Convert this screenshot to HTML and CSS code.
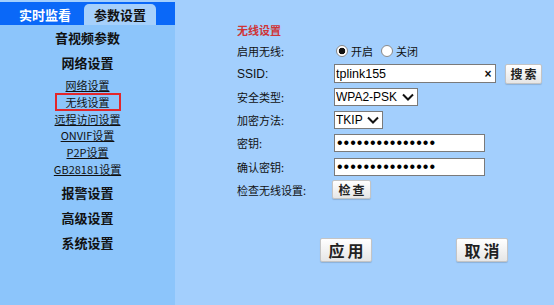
FILE: index.html
```html
<!DOCTYPE html>
<html lang="zh">
<head>
<meta charset="utf-8">
<title>参数设置</title>
<link rel="stylesheet" href="styles.css">
</head>
<body>
<div class="page">
  <aside class="side">
    <div class="tabbar">
      <span class="tab">实时监看</span>
      <span class="tab active">参数设置</span>
    </div>
    <nav class="nav">
      <a class="group">音视频参数</a>
      <a class="group sub-head">网络设置</a>
      <a class="link">网络设置</a>
      <a class="link current"><span class="mark">无线设置</span></a>
      <a class="link">远程访问设置</a>
      <a class="link">ONVIF设置</a>
      <a class="link">P2P设置</a>
      <a class="link">GB28181设置</a>
      <a class="group gap">报警设置</a>
      <a class="group">高级设置</a>
      <a class="group">系统设置</a>
    </nav>
  </aside>
  <main class="main">
    <div class="title">无线设置</div>
    <div class="form">
      <div class="row">
        <span class="label">启用无线:</span>
        <label class="radio"><input type="radio" name="en" checked><span>开启</span></label>
        <label class="radio"><input type="radio" name="en"><span>关闭</span></label>
      </div>
      <div class="row">
        <span class="label latin">SSID:</span>
        <span class="textbox ssid"><input type="text" value="tplink155"><span class="clear">×</span></span>
        <button class="btn small">搜索</button>
      </div>
      <div class="row">
        <span class="label">安全类型:</span>
        <span class="sel w84"><select><option>WPA2-PSK</option></select><svg class="chev" viewBox="0 0 12 8" width="12" height="8"><path d="M1 1.5 L6 6.5 L11 1.5" fill="none" stroke="#111" stroke-width="2"/></svg></span>
      </div>
      <div class="row">
        <span class="label">加密方法:</span>
        <span class="sel w49"><select><option>TKIP</option></select><svg class="chev" viewBox="0 0 12 8" width="12" height="8"><path d="M1 1.5 L6 6.5 L11 1.5" fill="none" stroke="#111" stroke-width="2"/></svg></span>
      </div>
      <div class="row">
        <span class="label">密钥:</span>
        <input class="pwd" type="password" value="123456789012345">
      </div>
      <div class="row">
        <span class="label">确认密钥:</span>
        <input class="pwd" type="password" value="123456789012345">
      </div>
      <div class="row">
        <span class="label">检查无线设置:</span>
        <button class="btn small check">检查</button>
      </div>
    </div>
    <div class="actions">
      <button class="btn big">应用</button>
      <button class="btn big">取消</button>
    </div>
  </main>
</div>
</body>
</html>
```

FILE: styles.css
```css
html, body {
  margin: 0;
  padding: 0;
  background: #a3cffd;
}
body {
  font-family: "Liberation Sans", "Noto Sans CJK SC", sans-serif;
  font-size: 12px;
  color: #111;
}
.page {
  display: flex;
  height: 305px;
}
.side {
  width: 175px;
  display: flex;
  flex-direction: column;
  padding-top: 2px;
  background: #a3cffd;
}
.tabbar {
  height: 23px;
  background: #0a68f8;
  display: flex;
  align-items: flex-end;
}
.tab {
  font-family: "Noto Sans CJK SC", sans-serif;
  font-size: 13px;
  font-weight: bold;
  color: #fff;
  line-height: 21px;
  height: 21px;
  text-align: center;
}
.tab:first-child {
  width: 72px;
  margin-left: 9px;
  margin-right: 3px;
}
.tab.active {
  width: 72px;
  background: #a6d0fb;
  color: #111;
  border-radius: 5px 5px 0 0;
}
.nav {
  flex: 1;
  background: #8cc5fb;
  display: flex;
  flex-direction: column;
  align-items: center;
}
.nav a {
  font-family: "Noto Sans CJK SC", sans-serif;
  color: #111;
  text-align: center;
}
.group {
  font-size: 13px;
  font-weight: bold;
  line-height: 25px;
  height: 25px;
}
.group.sub-head {
  margin-bottom: 2px;
}
.group.gap {
  margin-top: 2px;
}
.link {
  font-size: 11px;
  line-height: 16.8px;
  height: 16.8px;
  text-decoration: underline;
  color: #1a1a1a;
}
.mark {
  display: inline-block;
  padding: 0 9px;
  height: 14px;
  line-height: 14px;
  border: 2px solid #e3262a;
  margin-top: -1px;
}
.main {
  flex: 1;
  padding-left: 62px;
  padding-top: 22px;
  display: flex;
  flex-direction: column;
}
.title {
  font-family: "Noto Sans CJK SC", sans-serif;
  font-weight: bold;
  color: #cf3537;
  font-size: 11px;
  line-height: 16px;
  height: 16px;
}
.form {
  display: flex;
  flex-direction: column;
  padding-top: 1px;
}
.row {
  height: 23.2px;
  display: flex;
  align-items: center;
}
.label {
  width: 97px;
  flex: none;
  font-family: "Noto Sans CJK SC", sans-serif;
  font-size: 11px;
}
.label.latin {
  font-family: "Liberation Sans", "Noto Sans CJK SC", sans-serif;
  font-size: 12px;
}
.radio {
  display: flex;
  align-items: center;
  font-family: "Noto Sans CJK SC", sans-serif;
  font-size: 11px;
  margin-right: 8px;
}
.radio:first-of-type {
  margin-left: 2px;
}
.radio input {
  appearance: none;
  -webkit-appearance: none;
  width: 12px;
  height: 12px;
  margin: 0 3px 0 0;
  border: 1px solid #8a8a8a;
  border-radius: 50%;
  background: #fff;
  box-sizing: border-box;
}
.radio input:checked {
  background: radial-gradient(circle, #111 0 3px, #fff 3.6px);
}
.textbox {
  display: flex;
  align-items: center;
  box-sizing: border-box;
  height: 19px;
  border: 1px solid #7a7a7a;
  background: #fff;
}
.ssid {
  width: 162px;
}
.textbox input {
  border: 0;
  outline: 0;
  flex: 1;
  min-width: 0;
  padding: 0 0 0 1px;
  font-family: "Liberation Sans", sans-serif;
  font-size: 12.5px;
  color: #000;
  background: transparent;
}
.clear {
  font-family: "Liberation Sans", sans-serif;
  font-size: 12px;
  font-weight: bold;
  width: 14px;
  text-align: center;
  margin-right: 0;
}
.btn {
  font-family: "Noto Sans CJK SC", sans-serif;
  font-weight: bold;
  color: #222;
  background: linear-gradient(#ffffff, #e6e6e6);
  border: 1px solid #c4c4c4;
  border-radius: 2px;
  box-shadow: 0 1px 1px rgba(0,0,0,0.15);
  padding: 0;
  letter-spacing: 2px;
}
.btn.small {
  font-size: 12px;
  height: 20px;
  width: 37px;
  line-height: 18px;
  margin-left: 9px;
  text-indent: 2px;
}
.btn.check {
  margin-left: -2px;
  width: 39px;
  height: 19px;
}
.sel {
  position: relative;
  display: inline-flex;
  height: 18px;
  box-sizing: border-box;
  border: 1px solid #7a7a7a;
  background: #fff;
}
.sel select {
  appearance: none;
  -webkit-appearance: none;
  border: 0;
  outline: 0;
  background: transparent;
  font-family: "Liberation Sans", sans-serif;
  font-size: 12px;
  color: #000;
  padding: 0 0 0 1px;
  width: 100%;
  height: 16px;
  line-height: 16px;
}
.sel .chev {
  position: absolute;
  right: 3px;
  top: 4px;
  pointer-events: none;
}
.w84 { width: 84px; }
.w49 { width: 49px; }
.pwd {
  box-sizing: border-box;
  width: 151px;
  height: 18px;
  border: 1px solid #7a7a7a;
  background: #fff;
  padding: 0 0 0 2px;
  font-family: "Liberation Sans", sans-serif;
  font-size: 16px;
  letter-spacing: 1px;
  outline: 0;
}
.actions {
  display: flex;
  margin-top: 37px;
  margin-left: 83px;
  gap: 84px;
}
.btn.big {
  font-size: 16px;
  width: 52px;
  height: 24px;
  line-height: 22px;
  letter-spacing: 3px;
  text-indent: 3px;
}
```
